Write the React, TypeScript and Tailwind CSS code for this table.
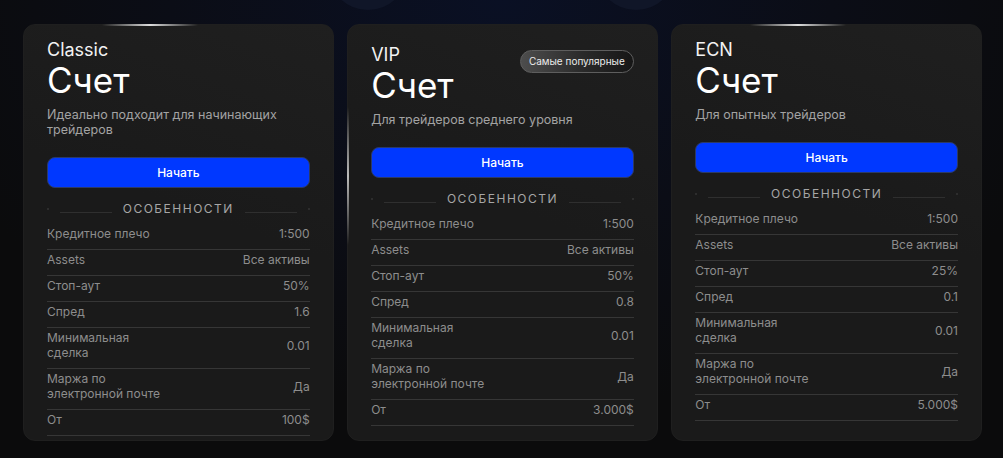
const FONT = { fontFamily: "Inter, 'Noto Sans', sans-serif" };

type Row = { label: React.ReactNode; value: string };
type Plan = {
  name: string;
  desc: React.ReactNode;
  popular?: boolean;
  glow: "top" | "left";
  rows: Row[];
};

const rowsFor = (stop: string, spread: string, from: string): Row[] => [
  { label: "Кредитное плечо", value: "1:500" },
  { label: "Assets", value: "Все активы" },
  { label: "Стоп-аут", value: stop },
  { label: "Спред", value: spread },
  { label: <>Минимальная<br />сделка</>, value: "0.01" },
  { label: <>Маржа по<br />электронной почте</>, value: "Да" },
  { label: "От", value: from },
];

const PLANS: Plan[] = [
  {
    name: "Classic",
    desc: <>Идеально подходит для начинающих<br />трейдеров</>,
    glow: "top",
    rows: rowsFor("50%", "1.6", "100$"),
  },
  {
    name: "VIP",
    desc: "Для трейдеров среднего уровня",
    popular: true,
    glow: "left",
    rows: rowsFor("50%", "0.8", "3.000$"),
  },
  {
    name: "ECN",
    desc: "Для опытных трейдеров",
    glow: "top",
    rows: rowsFor("25%", "0.1", "5.000$"),
  },
];

function FeaturesHeading() {
  return (
    <div className="mt-[13px] mb-[7px] flex h-4 items-center justify-between">
      <span className="h-[2px] w-[2px] rounded-full bg-[#343434]" />
      <span className="mt-[6px] h-px w-[52px] bg-[#2f2f2f]" />
      <span className="text-[12px] leading-4 tracking-[1.5px] text-[#a6a6a6]">ОСОБЕННОСТИ</span>
      <span className="mt-[6px] h-px w-[52px] bg-[#2f2f2f]" />
      <span className="h-[2px] w-[2px] rounded-full bg-[#343434]" />
    </div>
  );
}

function PlanCard({ plan }: { plan: Plan }) {
  return (
    <div className="relative rounded-xl border border-[#1f1f1f] bg-[linear-gradient(200deg,#1f1f1f_0%,#1a1a1a_45%,#1a1a1a_100%)] px-[23px] pb-1 pt-[15px]">
      {plan.glow === "top" ? (
        <span className="absolute -top-px left-[78px] h-[2px] w-[96px] bg-[linear-gradient(90deg,transparent,rgba(255,255,255,0.85)_50%,transparent)]" />
      ) : (
        <span className="absolute -left-px top-[82px] h-[138px] w-[2px] bg-[linear-gradient(180deg,transparent,rgba(255,255,255,0.7)_50%,transparent)]" />
      )}

      <div className={`flex items-start justify-between ${plan.popular ? "pt-[5px]" : ""}`}>
        <div className="text-[18px] leading-5 text-[#f2f2f2]">{plan.name}</div>
        {plan.popular && (
          <span className="-mb-[8px] mt-[5px] flex h-[23px] items-center rounded-full border border-[#5e5e5e] bg-[linear-gradient(90deg,#4d4d4d_0%,#2a2a2a_55%,#161616_100%)] px-[8px] text-[10px] text-[#ececec]">
            Самые популярные
          </span>
        )}
      </div>
      <div className="text-[35px] leading-[41px] text-white">Счет</div>
      <p className="mt-1.5 text-[12.5px] leading-[15px] text-[#a3a3a3]">{plan.desc}</p>

      <button className="mt-5 flex h-[31px] w-full items-center justify-center rounded-lg border border-[#2c3a66] bg-[#0038ff] text-[12px] font-medium text-white">
        Начать
      </button>

      <FeaturesHeading />

      <div>
        {plan.rows.map((r, i) => (
          <div
            key={i}
            className="flex items-center justify-between border-b border-[#363636] pb-[8px] pt-[2px] text-[12px] leading-[15px] text-[#8d8d8d]"
          >
            <span>{r.label}</span>
            <span>{r.value}</span>
          </div>
        ))}
      </div>
    </div>
  );
}

export default function App() {
  return (
    <div
      style={FONT}
      className="relative h-[458px] w-full overflow-hidden bg-[radial-gradient(ellipse_60%_90%_at_50%_0%,#0a1024_0%,#0b0d16_55%,#0b0b0c_100%)] pl-[23px] pr-[21px] pt-6"
    >
      <span className="absolute left-[328px] top-[-70px] h-[80px] w-[80px] rounded-full bg-[#101628]" />
      <span className="absolute left-[596px] top-[-70px] h-[80px] w-[80px] rounded-full bg-[#101628]" />
      <div className="relative grid grid-cols-3 gap-[13.5px]">
        {PLANS.map((p) => (
          <PlanCard key={p.name} plan={p} />
        ))}
      </div>
    </div>
  );
}
